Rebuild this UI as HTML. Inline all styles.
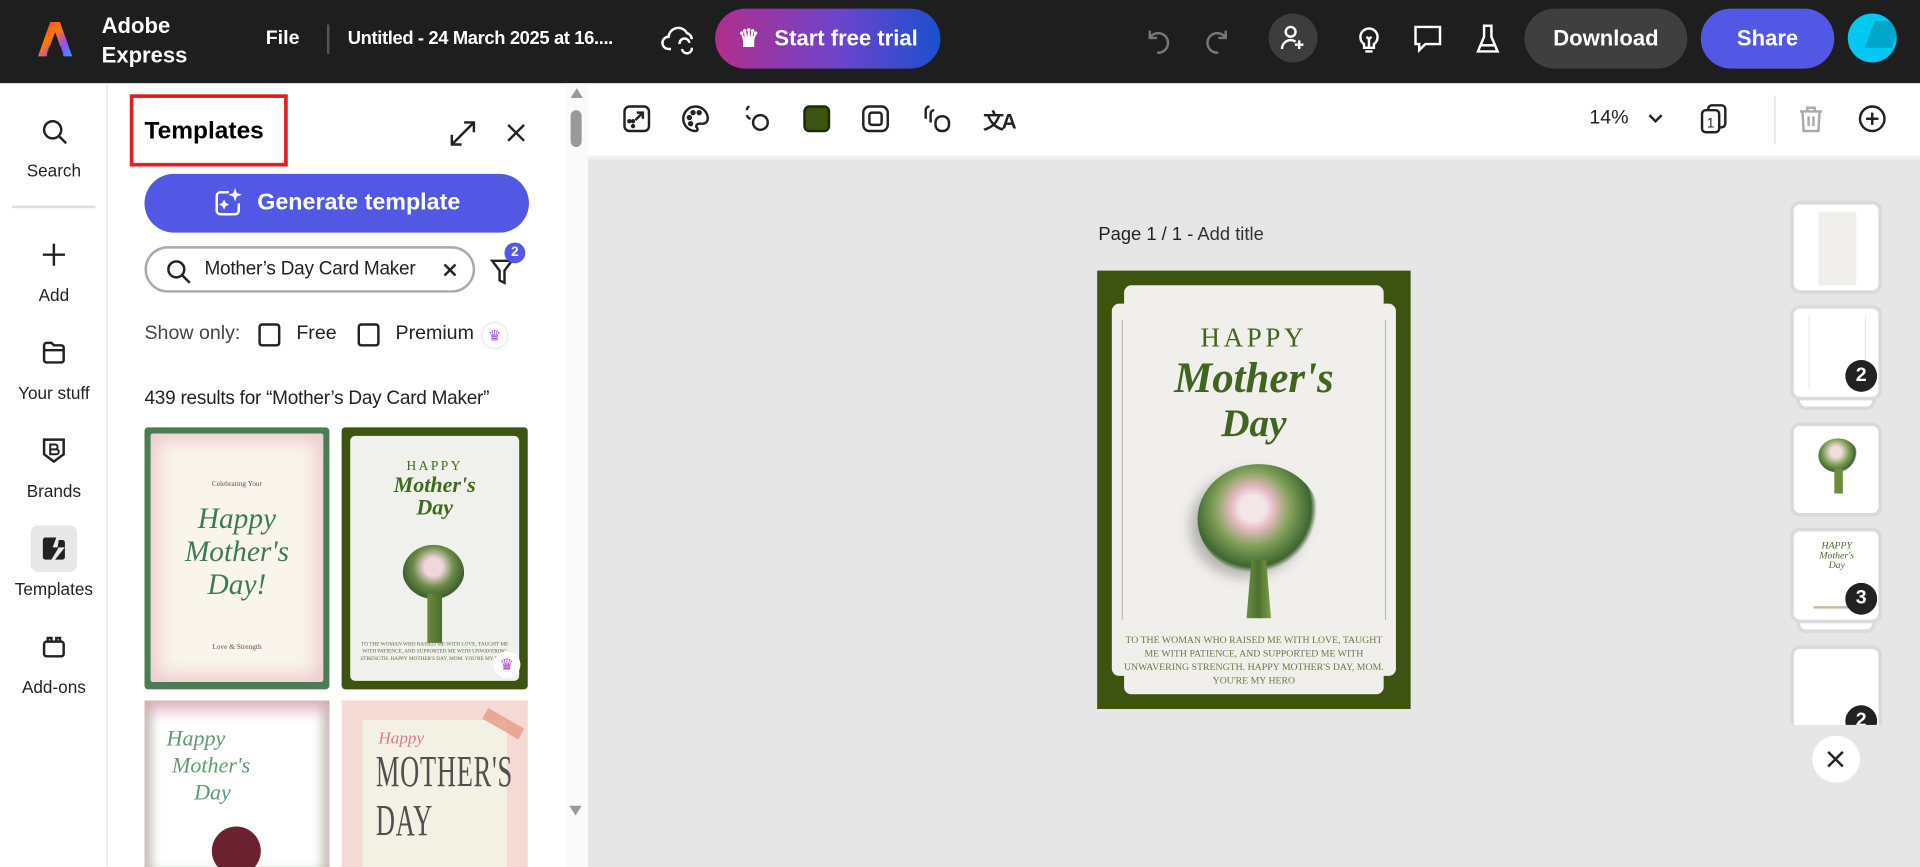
<!DOCTYPE html>
<html><head><meta charset="utf-8">
<style>
*{box-sizing:border-box;margin:0;padding:0}
html,body{width:1920px;height:821px;overflow:hidden;background:#e6e6e6;font-family:"Liberation Sans",sans-serif}
#w{position:absolute;left:0;top:0;width:1568px;height:700px;transform:scale(1.22449);transform-origin:0 0;background:#e6e6e6}
.a{position:absolute}
.top{left:0;top:0;width:1568px;height:68px;background:#1e1e1e;color:#fff}
.w{color:#fff;font-weight:bold}
.pill{border-radius:25px;display:flex;align-items:center;justify-content:center;font-weight:bold;font-size:18px;color:#fff}
.rail{left:0;top:68px;width:88px;height:640px;background:#fff;border-right:1px solid #e4e4e4}
.ri{position:absolute;left:0;width:88px;text-align:center;font-size:14px;color:#222}
.panel{left:88px;top:68px;width:392px;height:640px;background:#fff;overflow:hidden}
.tb{left:480px;top:68px;width:1088px;height:62px;background:#fff;border-bottom:3px solid #f0f0f0}
svg{position:absolute;overflow:visible}
.th{position:absolute;left:1462px;width:75px;background:#fff;border:3px solid #dadada;border-radius:8px}
.badge{position:absolute;width:26px;height:26px;border-radius:13px;background:#222;color:#fff;font-weight:bold;font-size:16px;text-align:center;line-height:26px}
.serif{font-family:"Liberation Serif",serif}
</style></head><body><div id="w">
<div class="a top">
 <svg style="left:30px;top:16px" width="30" height="32" viewBox="0 0 30 32"><defs><linearGradient id="lg" x1="0" y1="0" x2="1" y2="1"><stop offset="0" stop-color="#ff2d55"/><stop offset=".4" stop-color="#ff7a00"/><stop offset=".7" stop-color="#9b4dff"/><stop offset="1" stop-color="#2d9bff"/></linearGradient></defs><path d="M11 2h8l10 28h-7l-7-20-7 20H1z" fill="url(#lg)"/><path d="M10 22h10l2 6H8z" fill="#1e1e1e" opacity=".6"/></svg>
 <div class="a w" style="left:83px;top:9px;font-size:18px;line-height:24px">Adobe<br>Express</div>
 <div class="a" style="left:217px;top:23px;font-size:16px;font-weight:bold">File</div>
 <div class="a" style="left:267px;top:20px;width:2px;height:24px;background:#555"></div>
 <div class="a w" style="left:284px;top:23px;font-size:15px;letter-spacing:-.3px">Untitled - 24 March 2025 at 16....</div>
 <svg style="left:540px;top:18px" width="30" height="28" viewBox="0 0 30 28" fill="none" stroke="#fff" stroke-width="2"><path d="M8 22H6a5 5 0 0 1 0-10 8 8 0 0 1 15-3 6 6 0 0 1 4 5"/><path d="M15 18a4 4 0 0 1 8-1M25 21a4 4 0 0 1-8 1"/></svg>
 <div class="a pill" style="left:584px;top:7px;width:184px;height:49px;background:linear-gradient(90deg,#b12e8a,#6d44cc 55%,#1c4fcf)"><span style="font-size:20px;margin-right:12px">♛</span>Start free trial</div>
 <svg style="left:933px;top:20px" width="24" height="24" viewBox="0 0 24 24" fill="none" stroke="#777" stroke-width="2"><path d="M6 5v6h6"/><path d="M6 11a8 8 0 1 1 6 12"/></svg>
 <svg style="left:983px;top:20px" width="24" height="24" viewBox="0 0 24 24" fill="none" stroke="#777" stroke-width="2"><path d="M18 5v6h-6"/><path d="M18 11a8 8 0 1 0-6 12"/></svg>
 <div class="a" style="left:1036px;top:11px;width:40px;height:40px;border-radius:20px;background:#3d3d3d"></div>
 <svg style="left:1045px;top:20px" width="22" height="22" viewBox="0 0 22 22" fill="none" stroke="#fff" stroke-width="2"><circle cx="9" cy="6" r="4"/><path d="M2 20a7 7 0 0 1 11-6M16 13v7M12.5 16.5h7"/></svg>
 <svg style="left:1108px;top:20px" width="20" height="24" viewBox="0 0 20 24" fill="none" stroke="#fff" stroke-width="2"><path d="M6 16a7 7 0 1 1 8 0v3H6z"/><path d="M7 22h6M10 19v-7l-2-2M10 12l2-2"/></svg>
 <svg style="left:1154px;top:20px" width="24" height="24" viewBox="0 0 24 24" fill="none" stroke="#fff" stroke-width="2"><path d="M2 2h20v14H10l-5 5v-5H2z"/></svg>
 <svg style="left:1205px;top:19px" width="20" height="26" viewBox="0 0 20 26" fill="none" stroke="#fff" stroke-width="2"><path d="M6 2h8M7 2v9L2 23h16L13 11V2"/><path d="M4 18h12" /></svg>
 <div class="a pill" style="left:1245px;top:7px;width:133px;height:49px;background:#3f3f3f">Download</div>
 <div class="a pill" style="left:1389px;top:7px;width:109px;height:49px;background:#5258e4">Share</div>
 <div class="a" style="left:1509px;top:11px;width:40px;height:40px;border-radius:20px;background:#00c8f0;overflow:hidden"><div style="position:absolute;left:18px;top:6px;width:22px;height:22px;background:#00a6c8;transform:skewX(-20deg)"></div></div>
</div>

<div class="a rail">
 <svg style="left:34px;top:29px" width="22" height="22" viewBox="0 0 22 22" fill="none" stroke="#222" stroke-width="2"><circle cx="9" cy="9" r="7"/><path d="M14 14l6 6"/></svg>
 <div class="ri" style="top:63px">Search</div>
 <div class="a" style="left:10px;top:100px;width:68px;height:2px;background:#ddd"></div>
 <svg style="left:35px;top:131px" width="18" height="18" viewBox="0 0 18 18" stroke="#222" stroke-width="2"><path d="M9 0v18M0 9h18"/></svg>
 <div class="ri" style="top:165px">Add</div>
 <svg style="left:34px;top:210px" width="20" height="20" viewBox="0 0 20 20" fill="none" stroke="#222" stroke-width="2"><path d="M2 4a2 2 0 0 1 2-2h4l2 2h6a2 2 0 0 1 2 2v10a2 2 0 0 1-2 2H4a2 2 0 0 1-2-2zM2 8h16"/></svg>
 <div class="ri" style="top:245px">Your stuff</div>
 <svg style="left:34px;top:289px" width="20" height="22" viewBox="0 0 20 22" fill="none" stroke="#222" stroke-width="2"><path d="M2 2h16v12l-8 6-8-6z"/><path d="M7 6h4a2 2 0 0 1 0 4H7zM7 10h5a2 2 0 0 1 0 4H7z" stroke-width="1.6"/></svg>
 <div class="ri" style="top:325px">Brands</div>
 <div class="a" style="left:25px;top:361px;width:38px;height:38px;border-radius:6px;background:#e8e8e8"></div>
 <svg style="left:33px;top:369px" width="22" height="22" viewBox="0 0 22 22"><path d="M4 2h9l-3 8h5L9 20H4a2 2 0 0 1-2-2V4a2 2 0 0 1 2-2z" fill="#222"/><path d="M15 4h3a2 2 0 0 1 2 2v12a2 2 0 0 1-2 2h-6l8-10h-6z" fill="#222"/></svg>
 <div class="ri" style="top:405px">Templates</div>
 <svg style="left:34px;top:450px" width="20" height="20" viewBox="0 0 20 20" fill="none" stroke="#222" stroke-width="2"><rect x="2" y="6" width="16" height="12" rx="2"/><path d="M5 6V3h3v3M12 6V3h3v3"/></svg>
 <div class="ri" style="top:485px">Add-ons</div>
</div>

<div class="a panel">
 <div class="a" style="left:18px;top:9px;width:129px;height:59px;border:3px solid #e02020"></div>
 <div class="a" style="left:30px;top:28px;font-size:20px;font-weight:bold;color:#000">Templates</div>
 <svg style="left:279px;top:30px" width="22" height="22" viewBox="0 0 22 22" fill="none" stroke="#222" stroke-width="2"><path d="M2 20L20 2M12 2h8v8M2 12v8h8"/></svg>
 <svg style="left:326px;top:33px" width="15" height="15" viewBox="0 0 15 15" stroke="#222" stroke-width="2"><path d="M1 1l13 13M14 1L1 14"/></svg>
 <div class="a pill" style="left:30px;top:74px;width:314px;height:48px;background:#5258e4;font-size:19px"><svg style="position:relative;margin-right:12px" width="24" height="24" viewBox="0 0 24 24" fill="none" stroke="#fff" stroke-width="2"><path d="M13 3H6a3 3 0 0 0-3 3v12a3 3 0 0 0 3 3h12a3 3 0 0 0 3-3v-6"/><path d="M18 1l1 3 3 1-3 1-1 3-1-3-3-1 3-1zM9 10l1 2 2 1-2 1-1 2-1-2-2-1 2-1z" fill="#fff" stroke-width="1"/></svg>Generate template</div>
 <div class="a" style="left:30px;top:133px;width:270px;height:38px;border:2px solid #aaa;border-radius:20px"></div>
 <svg style="left:48px;top:144px" width="20" height="20" viewBox="0 0 20 20" fill="none" stroke="#222" stroke-width="2"><circle cx="8" cy="8" r="6.5"/><path d="M13 13l6 6"/></svg>
 <div class="a" style="left:79px;top:143px;font-size:15.5px;color:#222;letter-spacing:-.2px">Mother’s Day Card Maker</div>
 <svg style="left:274px;top:147px" width="11" height="11" viewBox="0 0 11 11" stroke="#222" stroke-width="2"><path d="M1 1l9 9M10 1L1 10"/></svg>
 <svg style="left:313px;top:141px" width="18" height="24" viewBox="0 0 18 24" fill="none" stroke="#222" stroke-width="2"><path d="M1 4h16l-6 8v10l-4-2v-8z"/></svg>
 <div class="a" style="left:324px;top:130px;width:17px;height:17px;border-radius:9px;background:#5258e4;color:#fff;font-size:11px;font-weight:bold;text-align:center;line-height:17px">2</div>
 <div class="a" style="left:30px;top:196px;font-size:16px;color:#444">Show only:</div>
 <div class="a" style="left:123px;top:196px;width:18px;height:19px;border:2px solid #222;border-radius:3px"></div>
 <div class="a" style="left:154px;top:196px;font-size:16px;color:#222">Free</div>
 <div class="a" style="left:204px;top:196px;width:18px;height:19px;border:2px solid #222;border-radius:3px"></div>
 <div class="a" style="left:235px;top:196px;font-size:16px;color:#222">Premium</div>
 <div class="a" style="left:306px;top:196px;width:20px;height:20px;border-radius:10px;background:#fff;box-shadow:0 0 3px #ccc;color:#a050d0;font-size:12px;text-align:center;line-height:20px">♛</div>
 <div class="a" style="left:30px;top:249px;font-size:15.5px;color:#222;letter-spacing:-.2px">439 results for “Mother’s Day Card Maker”</div>
 <div class="a" style="left:30px;top:281px;width:151px;height:214px;background:#4a7d55;border-radius:3px">
  <div class="a" style="left:5px;top:5px;width:141px;height:203px;background:#f9f5ec;border-radius:2px;box-shadow:inset 0 0 14px 6px rgba(230,170,180,.55)"></div>
  <div class="a serif" style="left:0;width:151px;top:44px;text-align:center;font-size:6px;color:#6a4d4d">Celebrating Your</div>
  <div class="a serif" style="left:0;width:151px;top:62px;text-align:center;font-size:24px;font-style:italic;color:#3e7a56;line-height:27px">Happy<br>Mother's<br>Day!</div>
  <div class="a serif" style="left:0;width:151px;top:177px;text-align:center;font-size:6px;color:#6a4d4d">Love &amp; Strength</div>
 </div>
 <div class="a" style="left:191px;top:281px;width:152px;height:214px;background:#3d5411;border-radius:3px">
  <div class="a" style="left:7px;top:7px;width:138px;height:200px;background:#f0f0ec;border-radius:4px"></div>
  <div class="a serif" style="left:0;width:152px;top:26px;text-align:center;font-size:11px;color:#3d6b1a;letter-spacing:2px">HAPPY</div>
  <div class="a serif" style="left:0;width:152px;top:38px;text-align:center;font-size:18px;font-style:italic;font-weight:bold;color:#3d6b1a;line-height:18px">Mother's<br>Day</div>
  <div class="a" style="left:50px;top:96px;width:50px;height:45px;border-radius:50%;background:radial-gradient(circle at 50% 40%,#f1d6dc 0 20%,#6d8c4a 45%,#3b5e2c 70%,transparent 72%)"></div>
  <div class="a" style="left:70px;top:136px;width:12px;height:40px;background:linear-gradient(90deg,#6b8a3c,#4d6e2c)"></div>
  <div class="a serif" style="left:12px;width:128px;top:174px;text-align:center;font-size:4.3px;color:#5d6d44;line-height:6px">TO THE WOMAN WHO RAISED ME WITH LOVE, TAUGHT ME WITH PATIENCE, AND SUPPORTED ME WITH UNWAVERING STRENGTH. HAPPY MOTHER'S DAY, MOM. YOU'RE MY HERO</div>
  <div class="a" style="left:124px;top:183px;width:22px;height:22px;border-radius:11px;background:#fff;color:#b04ad0;font-size:13px;text-align:center;line-height:22px">♛</div>
 </div>
 <div class="a" style="left:30px;top:504px;width:151px;height:140px;background:#fff;overflow:hidden;box-shadow:inset 0 8px 10px 2px rgba(220,160,180,.6),inset 6px 0 8px rgba(140,170,130,.5),inset -6px 0 8px rgba(140,170,130,.5)">
  <div class="a serif" style="left:18px;top:20px;font-size:18px;font-style:italic;color:#5f9a72;line-height:22px">Happy<br>&nbsp;Mother's<br>&nbsp;&nbsp;&nbsp;&nbsp;&nbsp;Day</div>
  <div class="a" style="left:55px;top:103px;width:40px;height:40px;border-radius:20px;background:#6a2230"></div>
 </div>
 <div class="a" style="left:191px;top:504px;width:152px;height:140px;background:#f5d9d4;overflow:hidden">
  <div class="a" style="left:17px;top:16px;width:118px;height:130px;background:#f3f1e4"></div>
  <div class="a" style="left:115px;top:14px;width:34px;height:10px;background:#e79a86;transform:rotate(30deg);opacity:.8"></div>
  <div class="a serif" style="left:30px;top:24px;font-size:14px;font-style:italic;color:#e07a8c">Happy</div>
  <div class="a serif" style="left:28px;top:38px;font-size:36px;color:#4f4f4f;transform:scaleX(.6);transform-origin:0 0;letter-spacing:1px;line-height:40px">MOTHER'S<br>DAY</div>
 </div>
 <div class="a" style="left:374px;top:0;width:18px;height:640px;background:#fafafa"></div>
 <div class="a" style="left:378px;top:4px;width:0;height:0;border-left:5px solid transparent;border-right:5px solid transparent;border-bottom:8px solid #999"></div>
 <div class="a" style="left:378px;top:22px;width:9px;height:30px;border-radius:5px;background:#999"></div>
 <div class="a" style="left:377px;top:590px;width:0;height:0;border-left:5px solid transparent;border-right:5px solid transparent;border-top:8px solid #999"></div>
</div>

<div class="a tb">
 <svg style="left:29px;top:18px" width="22" height="22" viewBox="0 0 22 22" fill="none" stroke="#222" stroke-width="2"><rect x="1" y="1" width="20" height="20" rx="4"/><path d="M10 12l6-6M11 6h5v5"/><circle cx="5" cy="13" r=".8" fill="#222"/><circle cx="8" cy="13" r=".8" fill="#222"/><circle cx="8" cy="17" r=".8" fill="#222"/></svg>
 <svg style="left:77px;top:18px" width="22" height="22" viewBox="0 0 22 22" fill="none" stroke="#222" stroke-width="2"><path d="M11 1a10 10 0 1 0 0 20c2 0 2-2 1-3s0-3 2-3h3a4 4 0 0 0 4-4C21 5 16 1 11 1z"/><circle cx="6" cy="10" r="1.2" fill="#222"/><circle cx="9" cy="6" r="1.2" fill="#222"/><circle cx="14" cy="6" r="1.2" fill="#222"/><circle cx="7" cy="15" r="1.2" fill="#222"/></svg>
 <svg style="left:127px;top:17px" width="22" height="24" viewBox="0 0 22 24" fill="none" stroke="#222" stroke-width="2"><path d="M5 2a3 3 0 0 0-2 3M3 9a4 4 0 0 0 3 3"/><circle cx="14" cy="15" r="6"/></svg>
 <div class="a" style="left:176px;top:18px;width:22px;height:22px;border-radius:5px;background:#3d5411;border:2px solid #1e2a08"></div>
 <svg style="left:224px;top:18px" width="22" height="22" viewBox="0 0 22 22" fill="none" stroke="#222" stroke-width="2"><rect x="1" y="1" width="20" height="20" rx="5"/><rect x="6" y="6" width="10" height="10" rx="2"/></svg>
 <svg style="left:274px;top:18px" width="22" height="22" viewBox="0 0 22 22" fill="none" stroke="#222" stroke-width="2"><path d="M5 1a3 3 0 0 0-3 3v7M9 4a3 3 0 0 0-3 3v7"/><rect x="10" y="9" width="11" height="12" rx="5"/></svg>
 <div class="a" style="left:323px;top:17px;font-size:17px;font-weight:bold;color:#222;letter-spacing:-2px">文A</div>
 <div class="a" style="left:818px;top:20px;font-size:16px;color:#222">14%</div>
 <svg style="left:866px;top:25px" width="12" height="8" viewBox="0 0 12 8" fill="none" stroke="#222" stroke-width="2"><path d="M1 1l5 5 5-5"/></svg>
 <svg style="left:908px;top:17px" width="24" height="24" viewBox="0 0 24 24" fill="none" stroke="#222" stroke-width="2"><rect x="2" y="5" width="14" height="18" rx="3"/><path d="M7 5V4a3 3 0 0 1 3-3h8a3 3 0 0 1 3 3v12a3 3 0 0 1-3 3h-2"/><text x="6" y="19" font-size="11" font-family="Liberation Sans" fill="#222" stroke="none">1</text></svg>
 <div class="a" style="left:969px;top:10px;width:1px;height:40px;background:#ddd"></div>
 <svg style="left:989px;top:18px" width="20" height="22" viewBox="0 0 20 22" fill="none" stroke="#aaa" stroke-width="2"><path d="M1 5h18M7 5V2h6v3M3 5l1 16h12l1-16M8 9v8M12 9v8"/></svg>
 <svg style="left:1038px;top:18px" width="22" height="22" viewBox="0 0 22 22" fill="none" stroke="#222" stroke-width="2"><circle cx="11" cy="11" r="10"/><path d="M11 6v10M6 11h10"/></svg>
</div>

<div class="a" style="left:897px;top:183px;font-size:15px;color:#222">Page 1 / 1 - <span style="color:#333">Add title</span></div>
<div class="a" style="left:896px;top:221px;width:256px;height:358px;background:#3d5411">
 <div class="a" style="left:22px;top:12px;width:212px;height:334px;background:#f0efeb;border-radius:6px"></div>
 <div class="a" style="left:12px;top:27px;width:232px;height:304px;background:#f0efeb;border-radius:6px"></div>
 <div class="a" style="left:20px;top:40px;width:1px;height:245px;background:#b8bca8"></div>
 <div class="a" style="left:235px;top:40px;width:1px;height:245px;background:#b8bca8"></div>
 <div class="a serif" style="left:0;width:256px;top:42px;text-align:center;font-size:22px;color:#41651e;letter-spacing:3px">HAPPY</div>
 <div class="a serif" style="left:0;width:256px;top:70px;text-align:center;font-size:35px;font-style:italic;font-weight:bold;color:#41651e;line-height:36px">Mother's</div>
 <div class="a serif" style="left:0;width:256px;top:106px;text-align:center;font-size:32px;font-style:italic;font-weight:bold;color:#41651e">Day</div>
 <div class="a" style="left:82px;top:158px;width:100px;height:90px;border-radius:50%;background:radial-gradient(circle at 45% 40%,#f3e6e6 0 14%,#e8bcc6 22%,#82a15a 40%,#3d6630 62%,transparent 68%);filter:drop-shadow(-6px 6px 5px rgba(0,0,0,.25))"></div>
 <div class="a" style="left:122px;top:236px;width:20px;height:48px;background:linear-gradient(90deg,#6c8e3c,#4d7030,#7fa04a);clip-path:polygon(20% 0,80% 0,100% 100%,0 100%)"></div>
 <div class="a serif" style="left:18px;width:220px;top:296px;text-align:center;font-size:8px;color:#6a7a45;line-height:11px">TO THE WOMAN WHO RAISED ME WITH LOVE, TAUGHT ME WITH PATIENCE, AND SUPPORTED ME WITH UNWAVERING STRENGTH. HAPPY MOTHER'S DAY, MOM. YOU'RE MY HERO</div>
</div>

<div class="th" style="top:164px;height:76px"><div class="a" style="left:20px;top:6px;width:31px;height:60px;background:#f0efeb"></div></div>
<div class="th" style="top:259px;height:76px;left:1467px;width:65px"></div>
<div class="th" style="top:249px;height:78px"><div class="a" style="left:12px;top:6px;width:1px;height:60px;background:#e8e8e8"></div><div class="a" style="left:58px;top:6px;width:1px;height:60px;background:#e8e8e8"></div><div class="badge" style="left:42px;top:42px">2</div></div>
<div class="th" style="top:345px;height:77px"><div class="a" style="left:20px;top:10px;width:32px;height:28px;border-radius:50%;background:radial-gradient(circle at 45% 40%,#f2dede 0 18%,#7b9a52 45%,#3d6630 65%,transparent 70%)"></div><div class="a" style="left:33px;top:35px;width:7px;height:20px;background:#6d8d3d"></div></div>
<div class="th" style="top:441px;height:76px;left:1467px;width:65px"></div>
<div class="th" style="top:431px;height:78px"><div class="a serif" style="left:20px;top:8px;width:30px;text-align:center;font-size:8px;font-style:italic;color:#4a6a2a;line-height:8px">HAPPY<br>Mother's<br>Day</div><div class="a" style="left:16px;top:61px;width:38px;height:2px;background:#b9c29a"></div><div class="badge" style="left:42px;top:42px">3</div></div>
<div class="th" style="top:527px;height:80px;border-bottom:none"><div class="a" style="left:18px;top:6px;width:34px;height:70px;background:#fff;border-radius:2px"></div><div class="badge" style="left:42px;top:46px">2</div></div>
<div class="a" style="left:1440px;top:592px;width:128px;height:110px;background:#e6e6e6"></div>
<div class="a" style="left:1480px;top:601px;width:39px;height:38px;border-radius:20px;background:#fff"></div>
<svg style="left:1492px;top:613px" width="14" height="14" viewBox="0 0 14 14" stroke="#222" stroke-width="2"><path d="M1 1l12 12M13 1L1 13"/></svg>
</div></body></html>
